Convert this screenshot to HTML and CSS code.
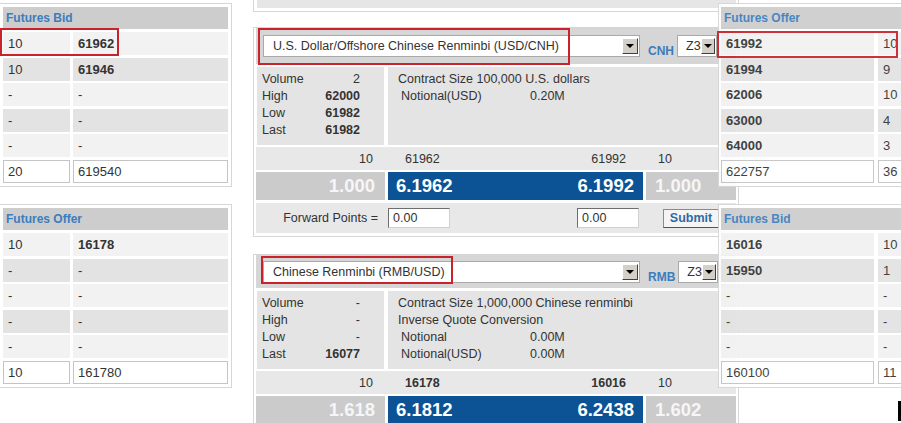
FILE: index.html
```html
<!DOCTYPE html>
<html>
    <head>
        <meta charset="utf-8" />
        <title>FX Futures</title>
        <link rel="stylesheet" href="styles.css">
    </head>
    <body>
        <div class="page">

            <!-- left books -->
            <div class="col-left">
                <div class="book book-first">
                    <div class="book-head">Futures Bid</div>
                    <div class="book-rows">
                        <div class="cell">10</div><div class="cell b">61962</div>
                        <div class="cell">10</div><div class="cell b">61946</div>
                        <div class="cell">-</div><div class="cell">-</div>
                        <div class="cell">-</div><div class="cell">-</div>
                        <div class="cell">-</div><div class="cell">-</div>
                        <div class="cell inp">20</div><div class="cell inp">619540</div>
                    </div>
                    <div class="hl hl-lbid"></div>
                </div>
                <div class="book book-second">
                    <div class="book-head">Futures Offer</div>
                    <div class="book-rows">
                        <div class="cell">10</div><div class="cell b">16178</div>
                        <div class="cell">-</div><div class="cell">-</div>
                        <div class="cell">-</div><div class="cell">-</div>
                        <div class="cell">-</div><div class="cell">-</div>
                        <div class="cell">-</div><div class="cell">-</div>
                        <div class="cell inp">10</div><div class="cell inp">161780</div>
                    </div>
                </div>
            </div>

            <!-- pairs -->
            <div class="col-mid">
                <div class="stub"><div class="stub-fill"></div></div>

                <div class="pair pair-first">
                    <div class="pair-head">
                        <div class="sel sel-long"><span>U.S. Dollar/Offshore Chinese Renminbi (USD/CNH)</span><i class="sel-btn"></i></div>
                        <span class="ccy">CNH</span>
                        <div class="sel sel-short"><span>Z3</span><i class="sel-btn"></i></div>
                        <div class="hl hl-p1"></div>
                    </div>
                    <div class="pair-stats">
                        <div class="stats-l">
                            <span>Volume</span><span class="v n">2</span>
                            <span>High</span><span class="v">62000</span>
                            <span>Low</span><span class="v">61982</span>
                            <span>Last</span><span class="v">61982</span>
                        </div>
                        <div class="stats-r">
                            <div>Contract Size 100,000 U.S. dollars</div>
                            <div class="kv"><span>Notional(USD)</span><span>0.20M</span></div>
                        </div>
                    </div>
                    <div class="pair-size">
                        <div class="sz-l">10</div>
                        <div class="sz-m"><span>61962</span><span>61992</span></div>
                        <div class="sz-r">10</div>
                    </div>
                    <div class="pair-px">
                        <div class="px-side px-l">1.000</div>
                        <div class="px-mid"><span>6.1962</span><span>6.1992</span></div>
                        <div class="px-side px-r">1.000</div>
                    </div>
                    <div class="pair-fwd">
                        <div class="fwd-l">Forward Points =</div>
                        <div class="fwd-m"><input class="fwd-inp" type="text" value="0.00"><input class="fwd-inp" type="text" value="0.00"></div>
                        <div class="fwd-r"><button class="submit">Submit</button></div>
                    </div>
                </div>

                <div class="pair pair-second">
                    <div class="pair-head">
                        <div class="sel sel-long"><span>Chinese Renminbi (RMB/USD)</span><i class="sel-btn"></i></div>
                        <span class="ccy">RMB</span>
                        <div class="sel sel-short"><span>Z3</span><i class="sel-btn"></i></div>
                        <div class="hl hl-p2"></div>
                    </div>
                    <div class="pair-stats">
                        <div class="stats-l">
                            <span>Volume</span><span class="v n">-</span>
                            <span>High</span><span class="v n">-</span>
                            <span>Low</span><span class="v n">-</span>
                            <span>Last</span><span class="v">16077</span>
                        </div>
                        <div class="stats-r">
                            <div>Contract Size 1,000,000 Chinese renminbi</div>
                            <div>Inverse Quote Conversion</div>
                            <div class="kv"><span>Notional</span><span>0.00M</span></div>
                            <div class="kv"><span>Notional(USD)</span><span>0.00M</span></div>
                        </div>
                    </div>
                    <div class="pair-size bold">
                        <div class="sz-l">10</div>
                        <div class="sz-m"><span>16178</span><span>16016</span></div>
                        <div class="sz-r">10</div>
                    </div>
                    <div class="pair-px">
                        <div class="px-side px-l">1.618</div>
                        <div class="px-mid"><span>6.1812</span><span>6.2438</span></div>
                        <div class="px-side px-r">1.602</div>
                    </div>
                </div>
            </div>

            <!-- right books, window laid over the pairs -->
            <div class="col-right">
                <div class="book book-first rbook">
                    <div class="book-head">Futures Offer</div>
                    <div class="book-rows">
                        <div class="cell b">61992</div><div class="cell">10</div>
                        <div class="cell b">61994</div><div class="cell">9</div>
                        <div class="cell b">62006</div><div class="cell">10</div>
                        <div class="cell b">63000</div><div class="cell">4</div>
                        <div class="cell b">64000</div><div class="cell">3</div>
                        <div class="cell inp">622757</div><div class="cell inp">36</div>
                    </div>
                    <div class="hl hl-roffer"></div>
                </div>
                <div class="book book-second rbook">
                    <div class="book-head">Futures Bid</div>
                    <div class="book-rows">
                        <div class="cell b">16016</div><div class="cell">10</div>
                        <div class="cell b">15950</div><div class="cell">1</div>
                        <div class="cell">-</div><div class="cell">-</div>
                        <div class="cell">-</div><div class="cell">-</div>
                        <div class="cell">-</div><div class="cell">-</div>
                        <div class="cell inp">160100</div><div class="cell inp">11</div>
                    </div>
                </div>
                <div class="caret"></div>
            </div>

        </div>
    </body>
</html>
```

FILE: styles.css
```css
*
{
    box-sizing: border-box;
}

body
{
    font: 12.5px "Liberation Sans", Arial, sans-serif;
    color: #333333;
    background: #ffffff;
    margin: 0px;
}

.page
{
    position: relative;
    width: 901px;
    height: 423px;
    overflow: hidden;
    display: flex;
    align-items: flex-start;
}

/* ---------- order books ---------- */

.col-left
{
    width: 232px;
    flex: none;
    display: flex;
    flex-direction: column;
}

.book
{
    position: relative;
    border: 1px solid #d6d6d6;
    border-left: none;
    padding: 3px 3px 3px 3px;
    background: #ffffff;
}
.book-first
{
    margin-top: 3px;
}
.book-second
{
    margin-top: 17px;
}

.book-head
{
    height: 22px;
    background: #cdcdcd;
    color: #3b7dbd;
    font-weight: bold;
    font-size: 12px;
    padding-left: 3px;
    display: flex;
    align-items: center;
}

.book-rows
{
    margin-top: 3px;
    display: grid;
    grid-template-columns: 67px 1fr;
    grid-auto-rows: 23px;
    column-gap: 3px;
    row-gap: 2.6px;
}

.cell
{
    display: flex;
    align-items: center;
    padding-left: 5px;
    font-size: 13px;
    background: #f2f2f2;
}
.cell:nth-child(4n+3),
.cell:nth-child(4n+4)
{
    background: #e3e3e3;
}
.cell.b
{
    font-weight: bold;
}
.cell.inp
{
    background: #ffffff;
    border: 1px solid #c4c4c4;
    padding-left: 4px;
}

.col-right
{
    position: absolute;
    left: 718px;
    top: 0px;
    width: 200px;
}
.rbook
{
    border-left: 1px solid #d6d6d6;
    padding-left: 2px;
    opacity: 0.93;
}
.rbook .book-rows
{
    grid-template-columns: 153px 1fr;
    column-gap: 4px;
}
.caret
{
    width: 3px;
    height: 20px;
    margin: 13px 0 0 180px;
    background: #000000;
}

/* red highlight frames */
.hl
{
    position: absolute;
    border: 2px solid #c8232b;
    pointer-events: none;
}
.hl-lbid
{
    left: 0px;
    top: 24px;
    width: 119px;
    height: 28px;
}
.hl-roffer
{
    left: -2px;
    top: 27px;
    width: 181px;
    height: 27px;
}
.hl-p1
{
    left: 2px;
    top: 0px;
    width: 312px;
    height: 37px;
}
.hl-p2
{
    left: 5px;
    top: 1px;
    width: 192px;
    height: 28px;
}

/* ---------- currency pairs ---------- */

.col-mid
{
    width: 486px;
    margin-left: 21px;
    flex: none;
}

.stub
{
    height: 12px;
    border: 1px solid #d6d6d6;
    border-top: none;
    padding: 0 2px 3px 3px;
}
.stub-fill
{
    height: 8px;
    background: #e6e6e6;
}

.pair
{
    border: 1px solid #d6d6d6;
    padding: 0 2px 3px 2px;
}
.pair-first
{
    margin-top: 15px;
}
.pair-second
{
    margin-top: 17px;
}

.pair-head
{
    position: relative;
    height: 36px;
    background: #d6d6d6;
    display: flex;
    align-items: center;
    padding-left: 7px;
}
.pair-second .pair-head
{
    height: 33px;
}

.sel
{
    height: 22px;
    background: #ffffff;
    border: 1px solid #a9a9a9;
    display: flex;
    align-items: center;
    justify-content: space-between;
    padding: 0 1px 0 9px;
}
.sel-long
{
    width: 377px;
}
.sel-short
{
    width: 40px;
    padding-left: 8px;
}

.sel-btn
{
    width: 16px;
    height: 16px;
    background: #d4d0c8;
    border: 1px solid;
    border-color: #ffffff #404040 #404040 #ffffff;
    display: flex;
    align-items: center;
    justify-content: center;
}
.sel-btn::after
{
    content: "";
    border-left: 4px solid transparent;
    border-right: 4px solid transparent;
    border-top: 4px solid #000000;
}

.ccy
{
    color: #3b7dbd;
    font-weight: bold;
    font-size: 12px;
    margin: 10px 3px 0 8px;
}

.pair-stats
{
    margin-top: 3px;
    display: flex;
    gap: 4px;
    height: 78px;
}
.stats-l
{
    width: 127px;
    margin-left: 1px;
    background: #e4e4e4;
    display: grid;
    grid-template-columns: 1fr auto;
    grid-auto-rows: 17px;
    align-content: start;
    padding: 4px 24px 0 5px;
    line-height: 17px;
}
.stats-l .v
{
    text-align: right;
    font-weight: bold;
}
.stats-l .v.n
{
    font-weight: normal;
}
.stats-r
{
    flex: 1;
    background: #e4e4e4;
    padding: 4px 0 0 10px;
    line-height: 17px;
}
.kv
{
    display: grid;
    grid-template-columns: 129px auto;
    padding-left: 3px;
}

.pair-size,
.pair-px,
.pair-fwd
{
    display: grid;
    grid-template-columns: 129px 1fr 90px;
    column-gap: 3px;
}

.pair-size
{
    margin-top: 2px;
    height: 23px;
    background: #e8e8e8;
    align-items: center;
}
.pair-size.bold
{
    font-weight: bold;
}
.pair-size.bold .sz-l,
.pair-size.bold .sz-r
{
    font-weight: normal;
}
.sz-l
{
    text-align: right;
    padding-right: 12px;
}
.sz-m
{
    display: flex;
    justify-content: space-between;
    padding: 0 17px 0 17px;
}
.sz-r
{
    padding-left: 12px;
}

.pair-px
{
    margin-top: 2px;
    height: 28px;
    font-weight: bold;
    font-size: 18.5px;
    color: #ffffff;
}
.px-side
{
    background: #cbcbcb;
    display: flex;
    align-items: center;
    color: #f6f6f6;
}
.px-l
{
    justify-content: flex-end;
    padding-right: 10px;
}
.px-r
{
    padding-left: 9px;
}
.px-mid
{
    background: #0b5394;
    display: flex;
    align-items: center;
    justify-content: space-between;
    padding: 0 9px 0 8px;
}

.pair-fwd
{
    margin-top: 3px;
    height: 30px;
    background: #e8e8e8;
    align-items: center;
}
.fwd-l
{
    text-align: right;
    padding-right: 7px;
}
.fwd-m
{
    display: flex;
    justify-content: space-between;
    padding-right: 4px;
}
.fwd-inp
{
    width: 62px;
    height: 20px;
    margin: 0;
    padding: 0 0 0 4px;
    font: 12.5px "Liberation Sans", Arial, sans-serif;
    color: #333333;
    border: 1px solid;
    border-color: #6d6d6d #d0d0d0 #d0d0d0 #6d6d6d;
    background: #ffffff;
}
.fwd-r
{
    padding-left: 17px;
}
.submit
{
    width: 56px;
    height: 19px;
    margin: 0;
    padding: 0;
    font: bold 12.5px "Liberation Sans", Arial, sans-serif;
    color: #2e6aa6;
    background: #f4f4f4;
    border: 1px solid;
    border-color: #8a8a8a #555555 #555555 #8a8a8a;
}
```
